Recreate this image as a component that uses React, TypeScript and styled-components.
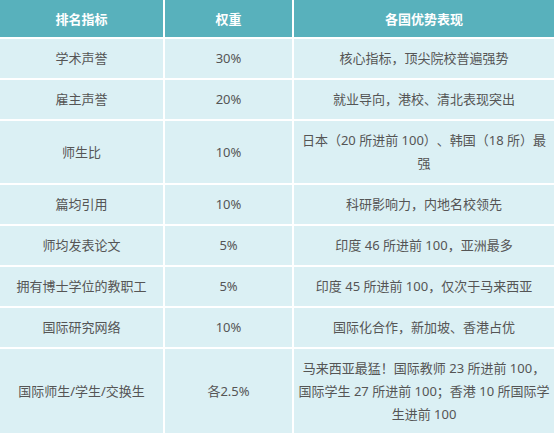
import styled, { createGlobalStyle } from 'styled-components';

const GlobalStyle = createGlobalStyle`
  html, body {
    margin: 0;
    padding: 0;
    background: #ffffff;
  }
  body {
    font-family: "Noto Sans", "Noto Sans CJK SC", sans-serif;
  }
`;

const Table = styled.table`
  width: 554px;
  border-collapse: collapse;
  table-layout: fixed;
  font-size: 13px;
  color: #555555;
  text-spacing-trim: space-all;
`;

const HeadCell = styled.th`
  height: 37px;
  padding: 0 3px;
  background: #58b1bc;
  color: #ffffff;
  font-weight: 700;
  text-align: center;
  border-bottom: 2px solid #ffffff;

  & + & {
    border-left: 2px solid #ffffff;
  }
`;

const Row = styled.tr`
  & + & td {
    border-top: 2px solid #ffffff;
  }
`;

const Cell = styled.td`
  background: #dbf0f4;
  padding: 8px 3px;
  line-height: 23px;
  text-align: center;
  vertical-align: middle;

  & + & {
    border-left: 2px solid #ffffff;
  }
`;

const rows: [string, string, string][] = [
  ['学术声誉', '30%', '核心指标，顶尖院校普遍强势'],
  ['雇主声誉', '20%', '就业导向，港校、清北表现突出'],
  ['师生比', '10%', '日本（20 所进前 100）、韩国（18 所）最强'],
  ['篇均引用', '10%', '科研影响力，内地名校领先'],
  ['师均发表论文', '5%', '印度 46 所进前 100，亚洲最多'],
  ['拥有博士学位的教职工', '5%', '印度 45 所进前 100，仅次于马来西亚'],
  ['国际研究网络', '10%', '国际化合作，新加坡、香港占优'],
  [
    '国际师生/学生/交换生',
    '各2.5%',
    '马来西亚最猛！国际教师 23 所进前 100，国际学生 27 所进前 100；香港 10 所国际学生进前 100',
  ],
];

export default function App() {
  return (
    <>
      <GlobalStyle />
      <Table>
        <colgroup>
          <col style={{ width: 164 }} />
          <col style={{ width: 129 }} />
          <col />
        </colgroup>
        <thead>
          <tr>
            <HeadCell>排名指标</HeadCell>
            <HeadCell>权重</HeadCell>
            <HeadCell>各国优势表现</HeadCell>
          </tr>
        </thead>
        <tbody>
          {rows.map(([name, weight, note]) => (
            <Row key={name}>
              <Cell>{name}</Cell>
              <Cell>{weight}</Cell>
              <Cell>{note}</Cell>
            </Row>
          ))}
        </tbody>
      </Table>
    </>
  );
}
